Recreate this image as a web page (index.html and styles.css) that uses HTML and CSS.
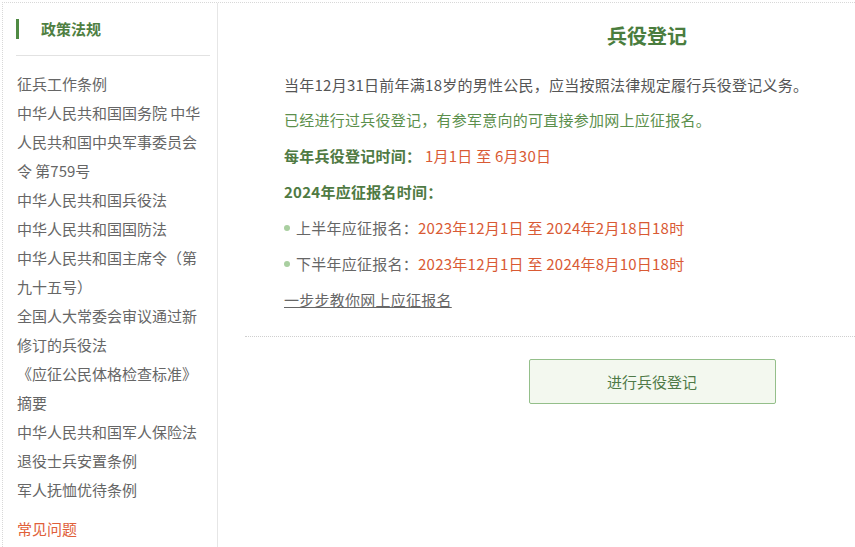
FILE: index.html
```html
<!DOCTYPE html>
<html lang="zh-CN">
<head>
  <meta charset="UTF-8" />
  <meta name="viewport" content="width=device-width, initial-scale=1.0"/>
  <title>兵役登记</title>
  <link rel="stylesheet" href="styles.css">
</head>
<body>
  <div class="page">
    <div class="sidebar">
      <div class="side-title">政策法规</div>
      <div class="side-rule"></div>
      <ul class="side-list">
        <li>征兵工作条例</li>
        <li>中华人民共和国国务院 中华人民共和国中央军事委员会令 第759号</li>
        <li>中华人民共和国兵役法</li>
        <li>中华人民共和国国防法</li>
        <li>中华人民共和国主席令（第九十五号）</li>
        <li>全国人大常委会审议通过新修订的兵役法</li>
        <li>《应征公民体格检查标准》摘要</li>
        <li>中华人民共和国军人保险法</li>
        <li>退役士兵安置条例</li>
        <li>军人抚恤优待条例</li>
      </ul>
      <div class="side-faq">常见问题</div>
    </div>

    <div class="main">
      <div class="main-inner">
        <h2 class="title">兵役登记</h2>
        <div class="info">
          <p>当年12月31日前年满18岁的男性公民，应当按照法律规定履行兵役登记义务。</p>
          <p class="green">已经进行过兵役登记，有参军意向的可直接参加网上应征报名。</p>
          <p><b>每年兵役登记时间：</b> <span class="red">1月1日 至 6月30日</span></p>
          <p><b>2024年应征报名时间：</b></p>
          <p class="dot">上半年应征报名：<span class="red">2023年12月1日 至 2024年2月18日18时</span></p>
          <p class="dot">下半年应征报名：<span class="red">2023年12月1日 至 2024年8月10日18时</span></p>
          <p><a class="guide" href="#">一步步教你网上应征报名</a></p>
        </div>
        <div class="divider"></div>
        <div class="actions">
          <button class="btn">进行兵役登记</button>
        </div>
      </div>
    </div>
  </div>
</body>
</html>
```

FILE: styles.css
```css
body {
  margin: 0;
  font-family: "Noto Sans CJK SC", "Noto Sans", sans-serif;
  background: #fff;
  color: #555;
  overflow: hidden;
}
.page {
  display: flex;
  margin: 2px 0 0 2px;
  height: 560px;
  border-top: 1px dotted #d8d8d8;
  border-left: 1px dotted #d8d8d8;
}
.sidebar {
  width: 215px;
  flex-shrink: 0;
  padding: 0 7px 0 13px;
  box-sizing: border-box;
  border-right: 1px solid #e6e6e6;
}
.side-title {
  margin-top: 16px;
  height: 20px;
  line-height: 20px;
  border-left: 3px solid #4f8a43;
  padding-left: 22px;
  font-size: 15px;
  font-weight: bold;
  color: #4f7f42;
}
.side-rule {
  height: 1px;
  background: #e2e2e2;
  margin-top: 16px;
}
.side-list {
  list-style: none;
  margin: 13px 0 0;
  padding: 0 0 0 1px;
  width: 190px;
  font-size: 15px;
  line-height: 29px;
  color: #666;
}
.side-faq {
  margin-top: 10px;
  padding-left: 1px;
  font-size: 15px;
  line-height: 29px;
  color: #e0603a;
}
.main {
  flex: 1;
  overflow: hidden;
  padding-left: 27px;
}
.main-inner {
  width: 804px;
}
.title {
  margin: 19px 0 0;
  text-align: center;
  font-size: 20px;
  line-height: 28px;
  color: #4a7d3e;
}
.info {
  padding: 17px 0 0 39px;
  font-size: 15px;
  color: #555;
}
.info p {
  margin: 0;
  line-height: 36px;
  letter-spacing: 0.25px;
}
.info p:first-child {
  line-height: 35px;
}
.info b {
  color: #4f7a43;
}
.green {
  color: #5b8f4c;
}
.red {
  color: #d95a34;
}
.dot {
  position: relative;
  padding-left: 12px;
  color: #666;
}
.dot::before {
  content: "";
  position: absolute;
  left: 0;
  top: 15px;
  width: 6px;
  height: 6px;
  border-radius: 50%;
  background: #a9cfa0;
}
.guide {
  color: #666;
  text-decoration: underline;
}
.divider {
  margin-top: 18px;
  border-top: 1px dotted #cfcfcf;
}
.actions {
  display: flex;
  justify-content: center;
  padding: 22px 0 0 10px;
}
.btn {
  width: 247px;
  height: 45px;
  font-family: inherit;
  font-size: 15px;
  color: #4f7a47;
  background: #f3f8ef;
  border: 1px solid #94bf8a;
  border-radius: 2px;
  cursor: pointer;
}
```
